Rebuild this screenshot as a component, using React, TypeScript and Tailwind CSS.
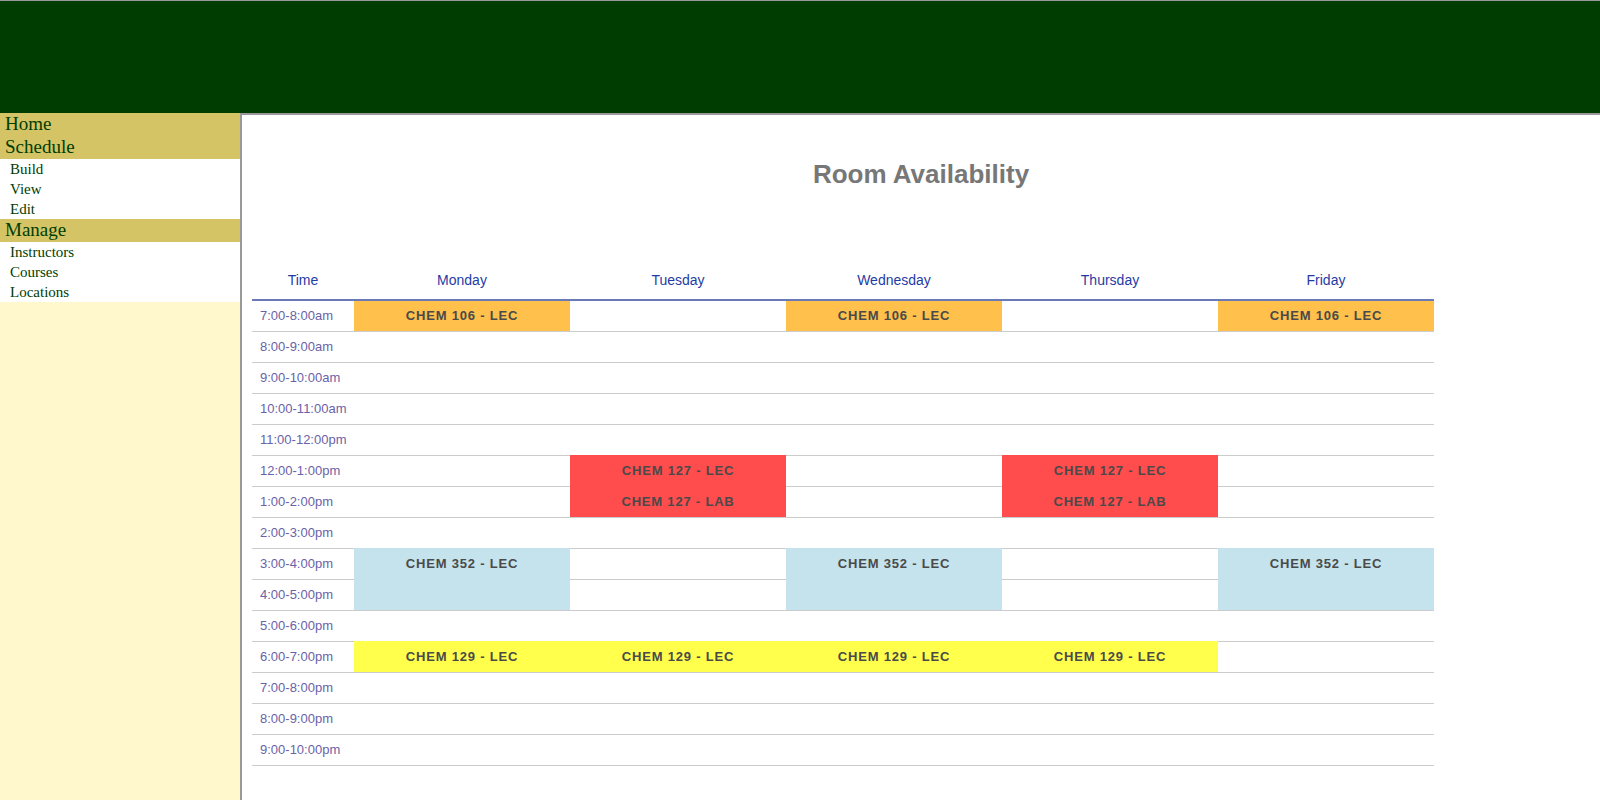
import React from "react";

type Cell = { label: string; color: string; span?: number } | null | "skip";

const times = [
  "7:00-8:00am",
  "8:00-9:00am",
  "9:00-10:00am",
  "10:00-11:00am",
  "11:00-12:00pm",
  "12:00-1:00pm",
  "1:00-2:00pm",
  "2:00-3:00pm",
  "3:00-4:00pm",
  "4:00-5:00pm",
  "5:00-6:00pm",
  "6:00-7:00pm",
  "7:00-8:00pm",
  "8:00-9:00pm",
  "9:00-10:00pm",
];

const ORANGE = "bg-[#ffc04c]";
const RED = "bg-[#ff4c4c]";
const BLUE = "bg-[#c5e3ec]";
const YELLOW = "bg-[#ffff4c]";

const c106 = { label: "CHEM 106 - LEC", color: ORANGE };
const c127l = { label: "CHEM 127 - LEC", color: RED };
const c127b = { label: "CHEM 127 - LAB", color: RED };
const c352 = { label: "CHEM 352 - LEC", color: BLUE, span: 2 };
const c129 = { label: "CHEM 129 - LEC", color: YELLOW };

const grid: Cell[][] = [
  [c106, null, c106, null, c106],
  [null, null, null, null, null],
  [null, null, null, null, null],
  [null, null, null, null, null],
  [null, null, null, null, null],
  [null, c127l, null, c127l, null],
  [null, c127b, null, c127b, null],
  [null, null, null, null, null],
  [c352, null, c352, null, c352],
  ["skip", null, "skip", null, "skip"],
  [null, null, null, null, null],
  [c129, c129, c129, c129, null],
  [null, null, null, null, null],
  [null, null, null, null, null],
  [null, null, null, null, null],
];

const days = ["Monday", "Tuesday", "Wednesday", "Thursday", "Friday"];

function SideHead({ children }: { children: React.ReactNode }) {
  return (
    <div className="bg-[#d4c466] pl-[5px] h-[23px] leading-[22px] text-[19px] text-[#003d00]">
      {children}
    </div>
  );
}

function SideItem({ children }: { children: React.ReactNode }) {
  return (
    <div className="bg-white pl-[10px] h-[20px] leading-[20px] text-[15px] text-[#003d00]">
      {children}
    </div>
  );
}

export default function App() {
  const cells: React.ReactNode[] = [];
  times.forEach((t, r) => {
    cells.push(
      <div
        key={`t${r}`}
        className="border-b border-[#cccccc] pl-[8px] flex items-center text-[13px] text-[#6a62a8]"
        style={{ gridRow: r + 1, gridColumn: 1 }}
      >
        {t}
      </div>
    );
    grid[r].forEach((cell, d) => {
      if (cell === "skip") return;
      if (cell === null) {
        cells.push(
          <div
            key={`c${r}-${d}`}
            className="border-b border-[#cccccc]"
            style={{ gridRow: r + 1, gridColumn: d + 2 }}
          />
        );
        return;
      }
      const span = cell.span ?? 1;
      cells.push(
        <div
          key={`c${r}-${d}`}
          className={`${cell.color} ${r > 0 ? "-mt-px" : ""} border-b border-[#cccccc] flex justify-center text-[13px] font-bold tracking-[0.8px] text-[#4a4a4a]`}
          style={{ gridRow: `${r + 1} / span ${span}`, gridColumn: d + 2 }}
        >
          <div className={`${r > 0 ? "h-[31px]" : "h-[30px]"} flex items-center`}>{cell.label}</div>
        </div>
      );
    });
  });

  return (
    <div className="h-screen w-full flex flex-col overflow-hidden" style={{ fontFamily: "'Liberation Sans', Arial, sans-serif" }}>
      <div className="h-[113px] shrink-0 bg-[#003d00] border-t border-[#999999]" />
      <div className="flex flex-1 min-h-0">
        <div
          className="w-[240px] shrink-0 bg-[#fff8cc]"
          style={{ fontFamily: "'Liberation Serif', 'Times New Roman', serif" }}
        >
          <SideHead>Home</SideHead>
          <SideHead>Schedule</SideHead>
          <SideItem>Build</SideItem>
          <SideItem>View</SideItem>
          <SideItem>Edit</SideItem>
          <SideHead>Manage</SideHead>
          <SideItem>Instructors</SideItem>
          <SideItem>Courses</SideItem>
          <SideItem>Locations</SideItem>
        </div>
        <div className="flex-1 bg-white border-t-2 border-l-2 border-[#999999] px-[10px]">
          <h1 className="mt-[44px] h-[30px] leading-[30px] text-center text-[26px] font-bold text-[#777777]">
            Room Availability
          </h1>
          <div className="mt-[71px] w-[1182px]">
            <div className="grid grid-cols-[102px_repeat(5,216px)] h-[41px] pt-[2px] border-b-2 border-[#6a7ab8] text-[14px] text-[#1f3ca6]">
              <div className="flex items-center justify-center">Time</div>
              {days.map((d) => (
                <div key={d} className="flex items-center justify-center">
                  {d}
                </div>
              ))}
            </div>
            <div className="grid grid-cols-[102px_repeat(5,216px)] grid-rows-[repeat(15,31px)]">
              {cells}
            </div>
          </div>
        </div>
      </div>
    </div>
  );
}
